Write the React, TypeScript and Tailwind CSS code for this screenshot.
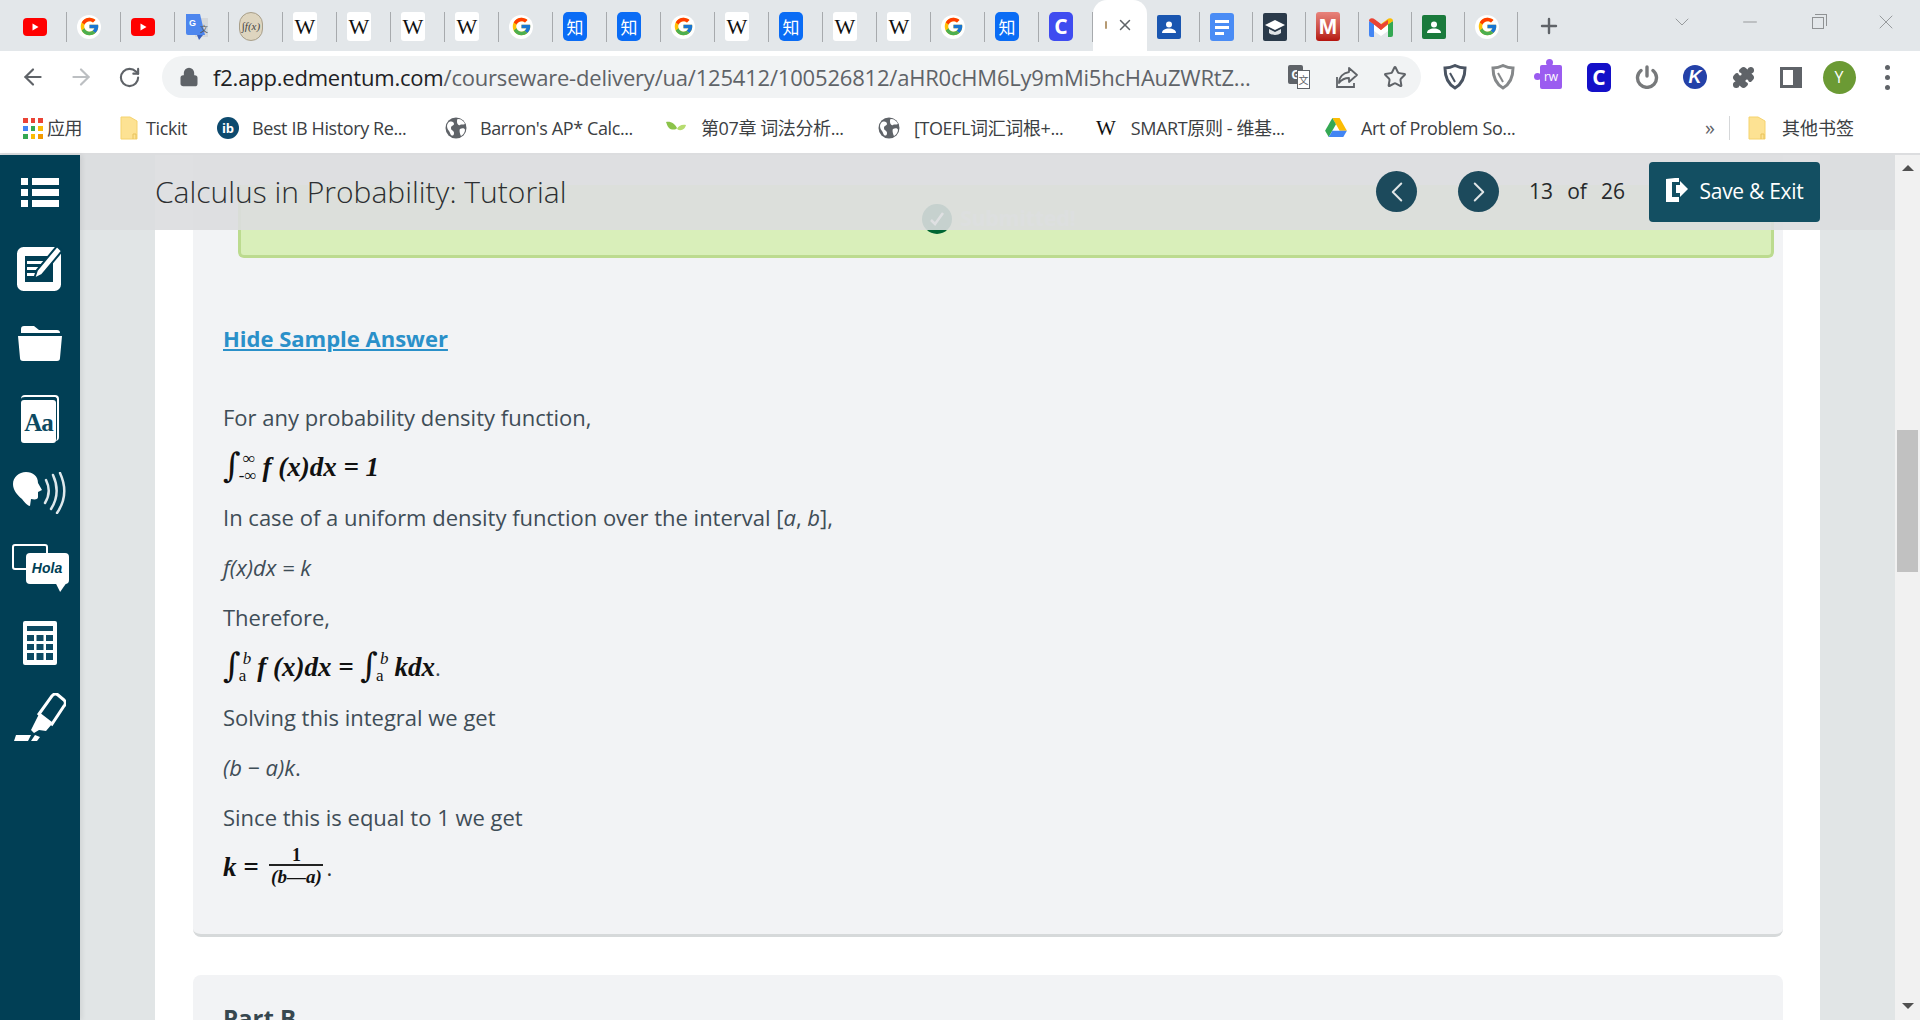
import { ReactNode } from "react";
import { ArrowLeft, ArrowRight, RotateCw, Lock, Star, X, Plus, Minus, ChevronDown, ChevronLeft, ChevronRight, Puzzle } from "lucide-react";
import { FcGoogle } from "react-icons/fc";

function YouTube() {
  return (
    <svg viewBox="0 0 24 24" className="w-6 h-6">
      <rect x="0" y="3" width="24" height="18" rx="4" fill="#f00" />
      <path d="M9.5 8.5v7l6-3.5z" fill="#fff" />
    </svg>
  );
}

function GoogleIcon() {
  return (
    <div className="w-6 h-6 rounded-full bg-white flex items-center justify-center">
      <FcGoogle size={21} />
    </div>
  );
}

function Wiki() {
  return (
    <div className="w-6 h-[29px] -my-[2px] rounded-[3px] bg-white flex items-center justify-center text-[22px] leading-none text-[#111] [font-family:'Liberation_Serif',serif]">
      W
    </div>
  );
}

function Zhihu() {
  return (
    <div className="w-6 h-[29px] -my-[2px] rounded-[5px] bg-[#0a6cf5] flex items-center justify-center text-[17px] leading-none text-white [font-family:'Noto_Sans_CJK_SC',sans-serif]">
      知
    </div>
  );
}

function Translate() {
  return (
    <svg viewBox="0 0 24 28" className="w-6 h-[28px] -my-[2px]">
      <path d="M10 5h13v19H10z" fill="#d5d8db" />
      <path d="M1 1h14l5 21H3a2 2 0 0 1-2-2z" fill="#4d86ee" />
      <path d="M12 22l2 5 4-5z" fill="#3a63c0" />
      <text x="4" y="13" fontSize="9" fontWeight="700" fill="#fff" fontFamily="Liberation Sans">G</text>
      <text x="15" y="19" fontSize="8" fill="#555" fontFamily="Noto Sans CJK SC">文</text>
    </svg>
  );
}

function Fx() {
  return (
    <div className="w-6 h-[29px] -my-[2px] rounded-full bg-[#ded5bf] border border-[#a89f8a] flex items-center justify-center text-[11px] leading-none italic text-[#444] [font-family:'Liberation_Serif',serif]">
      ∫f(x)
    </div>
  );
}

function CBadge({ bg = "#3f4cf0" }: { bg?: string }) {
  return (
    <div className={`w-6 h-[29px] -my-[2px] rounded-[5px] flex items-center justify-center text-[21px] font-bold leading-none text-white ${bg === "#3f4cf0" ? "bg-[#3f4cf0]" : "bg-[#1410c8]"}`}>
      C
    </div>
  );
}

function Contact({ bg }: { bg: string }) {
  return (
    <svg viewBox="0 0 24 24" className="w-6 h-6">
      <rect width="24" height="24" rx="2" fill={bg} />
      <circle cx="12" cy="9.5" r="3" fill="#fff" />
      <path d="M5 18c0-3 3-4.5 7-4.5s7 1.500 7 4.500z" fill="#fff" />
    </svg>
  );
}

function Docs() {
  return (
    <svg viewBox="0 0 24 28" className="w-6 h-[28px] -my-[2px]">
      <rect width="24" height="28" rx="3" fill="#4a8cf5" />
      <path d="M5 7h14v3H5zM5 13h14v3H5zM5 19h9v3H5z" fill="#fff" />
    </svg>
  );
}

function Cap() {
  return (
    <svg viewBox="0 0 24 28" className="w-6 h-[28px] -my-[2px]">
      <rect width="24" height="28" rx="2" fill="#2a3a4a" />
      <path d="M2 12l10-5 10 5-10 5z" fill="#fff" />
      <path d="M6 16v4c3 2.500 9 2.500 12 0v-4l-6 3z" fill="#dfe3e6" />
    </svg>
  );
}

function Mathway() {
  return (
    <div className="w-6 h-[29px] -my-[2px] rounded-[3px] bg-gradient-to-b from-[#e8837c] to-[#b5120d] flex items-center justify-center text-[22px] font-bold leading-none text-white [font-family:'Liberation_Sans',sans-serif]">
      M
    </div>
  );
}

function Gmail() {
  return (
    <svg viewBox="0 0 24 20" className="w-6 h-5">
      <path d="M0 4v14a2 2 0 0 0 2 2h3V7z" fill="#4285f4" />
      <path d="M24 4v14a2 2 0 0 1-2 2h-3V7z" fill="#34a853" />
      <path d="M5 7v7l7 5 7-5V7l-7 5z" fill="#fff" />
      <path d="M0 4l5 3.500 7 5.500V7L6 2.500C3.500.5 0 1 0 4z" fill="#ea4335" />
      <path d="M12 7v6l7-5.500L24 4c0-3-3.500-3.500-6-1.500z" fill="#fbbc04" />
      <path d="M5 7l7 6 7-6v-4l-7 4.500L5 3z" fill="#ea4335" />
    </svg>
  );
}

const tabsBefore: ReactNode[] = [
  <YouTube />, <GoogleIcon />, <YouTube />, <Translate />, <Fx />, <Wiki />, <Wiki />, <Wiki />, <Wiki />, <GoogleIcon />,
  <Zhihu />, <Zhihu />, <GoogleIcon />, <Wiki />, <Zhihu />, <Wiki />, <Wiki />, <GoogleIcon />, <Zhihu />, <CBadge />,
];

const tabsAfter: ReactNode[] = [
  <Contact bg="#1a56b0" />, <Docs />, <Cap />, <Mathway />, <Gmail />, <Contact bg="#1a7a3c" />, <GoogleIcon />,
];

function Tab({ icon, width }: { icon: ReactNode; width: string }) {
  return (
    <div className={`${width} h-[29px] mt-3 pl-[10px] flex items-center justify-between shrink-0`}>
      {icon}
      <div className="w-[1.5px] h-[30px] bg-[#a7aaad]" />
    </div>
  );
}

function TabStrip() {
  return (
    <div className="h-[51px] shrink-0 bg-[#e3e7ea] flex items-start pl-[13px]">
      {tabsBefore.map((icon, i) => (
        <Tab key={i} icon={icon} width="w-[54px]" />
      ))}
      <div className="w-[54px] h-[51px] bg-white rounded-t-[14px] shrink-0 flex items-center pl-[12px] pb-[1px]">
        <div className="w-[2px] h-2 bg-[#b69a73] rounded-full" />
        <X size={18} strokeWidth={2} className="ml-[9px] text-[#5f6368]" />
      </div>
      {tabsAfter.map((icon, i) => (
        <Tab key={i} icon={icon} width="w-[53px]" />
      ))}
      <Plus size={24} strokeWidth={2.4} className="ml-[19px] mt-[14px] text-[#5f6368] shrink-0" />
      <div className="ml-auto flex text-[#8f9294]">
        <div className="w-[68px] h-[44px] flex items-center justify-center"><ChevronDown size={24} strokeWidth={0.9} /></div>
        <div className="w-[68px] h-[44px] flex items-center justify-center"><Minus size={22} strokeWidth={1} /></div>
        <div className="w-[68px] h-[44px] flex items-center justify-center">
          <div className="w-3 h-3 mt-[2px] border border-[#8f9294] relative">
            <div className="absolute -top-[4px] -right-[4px] w-3 h-3 border-t border-r border-[#8f9294]" />
          </div>
        </div>
        <div className="w-[68px] h-[44px] flex items-center justify-center"><X size={24} strokeWidth={0.9} /></div>
      </div>
    </div>
  );
}

function Shield({ color }: { color: string }) {
  return (
    <svg viewBox="0 0 24 26" className="w-6 h-[26px]" fill="none" stroke={color} strokeWidth="3">
      <path d="M2 4c4 0 7-1 10-2.500C15 3 18 4 22 4c0 9-3 16-10 20C5 20 2 13 2 4z" />
      <path d="M7 9l5 9" strokeWidth="2" />
    </svg>
  );
}

function ExtBox({ children }: { children: ReactNode }) {
  return <div className="w-12 h-[52px] flex items-center justify-center shrink-0">{children}</div>;
}

function Toolbar() {
  return (
    <div className="h-[52px] shrink-0 bg-white flex items-center pl-[9px]">
      <ExtBox><ArrowLeft size={26} strokeWidth={2} className="text-[#5f6368]" /></ExtBox>
      <ExtBox><ArrowRight size={26} strokeWidth={2} className="text-[#bcbfc2]" /></ExtBox>
      <ExtBox><RotateCw size={23} strokeWidth={2.2} className="text-[#5f6368]" /></ExtBox>
      <div className="ml-[9px] w-[1259px] h-[42px] rounded-full bg-[#f1f3f4] flex items-center pl-[17px] pr-[2px]">
        <Lock size={20} strokeWidth={2.4} className="text-[#5f6368] fill-[#5f6368] shrink-0" />
        <div className="ml-[14px] w-[1041px] whitespace-nowrap overflow-hidden text-[22px] tracking-[-0.2px] text-[#5f6368]">
          <span className="text-[#202124]">f2.app.edmentum.com</span>/courseware-delivery/ua/125412/100526812/aHR0cHM6Ly9mMi5hcHAuZWRtZ...
        </div>
        <div className="ml-auto flex items-center">
          <ExtBox>
            <div className="relative w-[22px] h-[24px] text-[#5f6368]">
              <div className="absolute left-0 top-0 w-[15px] h-[19px] rounded-[2px] bg-[#5f6368] text-white text-[12px] font-bold leading-[19px] text-center">G</div>
              <div className="absolute right-0 bottom-0 w-[13px] h-[19px] border border-[#5f6368] bg-white text-[10px] leading-[17px] text-center [font-family:'Noto_Sans_CJK_SC',sans-serif]">文</div>
            </div>
          </ExtBox>
          <ExtBox>
            <svg viewBox="0 0 24 24" className="w-6 h-6" fill="none" stroke="#5f6368" strokeWidth="1.800">
              <path d="M2 12v10h17v-4" />
              <path d="M14 3l8 7-8 7v-4c-4 0-7 1-10 5 0-6 4-10 10-11z" strokeLinejoin="round" />
            </svg>
          </ExtBox>
          <ExtBox><Star size={24} strokeWidth={2} className="text-[#5f6368]" /></ExtBox>
        </div>
      </div>
      <div className="ml-[10px] flex items-center">
        <ExtBox><Shield color="#4a5462" /></ExtBox>
        <ExtBox><Shield color="#85888a" /></ExtBox>
        <ExtBox>
          <div className="relative w-[22px] h-[24px] bg-[#9b5cf0] rounded-[2px] text-white text-[12px] leading-[24px] text-center">
            <div className="absolute -top-[6px] left-[6px] w-[7px] h-[7px] rounded-full bg-[#9b5cf0]" />
            <div className="absolute top-[8px] -left-[6px] w-[7px] h-[7px] rounded-full bg-[#9b5cf0]" />
            rw
          </div>
        </ExtBox>
        <ExtBox><CBadge bg="#1410c8" /></ExtBox>
        <ExtBox>
          <svg viewBox="0 0 24 24" className="w-6 h-6" fill="none" stroke="#77797b" strokeWidth="3.400" strokeLinecap="round">
            <path d="M12 2v9" />
            <path d="M6 5.500a9.500 9.500 0 1 0 12 0" />
          </svg>
        </ExtBox>
        <ExtBox>
          <div className="w-6 h-6 rounded-full bg-[#2441a8] text-white text-[18px] font-bold italic leading-[24px] text-center [font-family:'Liberation_Sans',sans-serif]">K</div>
        </ExtBox>
        <ExtBox><Puzzle size={23} strokeWidth={2} className="text-[#5f6368] fill-[#5f6368]" /></ExtBox>
        <ExtBox>
          <div className="w-[22px] h-[21px] border-[3.500px] border-r-[9px] border-[#5f6368] bg-white" />
        </ExtBox>
        <ExtBox>
          <div className="w-[33px] h-[33px] rounded-full bg-[#6b9a34] text-white text-[16px] leading-[33px] text-center">Y</div>
        </ExtBox>
        <ExtBox>
          <div className="flex flex-col gap-[5px]">
            <div className="w-[5px] h-[5px] rounded-full bg-[#5f6368]" />
            <div className="w-[5px] h-[5px] rounded-full bg-[#5f6368]" />
            <div className="w-[5px] h-[5px] rounded-full bg-[#5f6368]" />
          </div>
        </ExtBox>
      </div>
    </div>
  );
}

function Apps() {
  const colors = ["bg-[#ea4335]", "bg-[#ea4335]", "bg-[#ea4335]", "bg-[#4285f4]", "bg-[#34a853]", "bg-[#fbbc04]", "bg-[#34a853]", "bg-[#fbbc04]", "bg-[#f29900]"];
  return (
    <div className="grid grid-cols-3 gap-[3px] w-[20px]">
      {colors.map((c, i) => (
        <div key={i} className={`h-[5px] ${c}`} />
      ))}
    </div>
  );
}

function FolderMark() {
  return (
    <svg viewBox="0 0 18 24" className="w-[18px] h-6">
      <path d="M1 1h9l7 4v18H1z" fill="#fde293" stroke="#f5d36f" />
      <path d="M13 23v-5h3v5" fill="none" stroke="#e8c25a" />
    </svg>
  );
}

function Globe() {
  return (
    <svg viewBox="0 0 22 22" className="w-[22px] h-[22px]">
      <circle cx="11" cy="11" r="10.500" fill="#5f6368" />
      <path d="M4 5c3-1 5 0 5 2s-3 1-3 4 3 2 3 5-2 3-3 2-1-3-2-4-2-3-2-5 1-3 2-4zM13 2c3 0 6 2 7 5-2 1-4 0-5 1s-3-1-3-3 0-3 1-3zM15 12c2-1 5-1 5 1s-2 5-4 6c-1-2-2-6-1-7z" fill="#fff" />
    </svg>
  );
}

function Leaf() {
  return (
    <svg viewBox="0 0 20 14" className="w-5 h-[14px]">
      <path d="M0 1c5-1 9 2 11 6-1 2-6 2-8 0S1 3 0 1z" fill="#8bc34a" />
      <path d="M11 8c1-3 5-5 9-4-1 4-5 7-9 4z" fill="#b6dc6f" />
    </svg>
  );
}

function DriveIcon() {
  return (
    <svg viewBox="0 0 24 22" className="w-[22px] h-5">
      <path d="M8 0h8l8 14h-8z" fill="#fbbc04" />
      <path d="M8 0l-8 14 4 7 8-14z" fill="#34a853" />
      <path d="M4 21l4-7h16l-4 7z" fill="#4285f4" />
    </svg>
  );
}

const bookmarks = [
  { icon: <Apps />, label: "应用", width: "w-[97px]", gap: "ml-[4px]" },
  { icon: <FolderMark />, label: "Tickit", width: "w-[97px]", gap: "ml-[8px]" },
  {
    icon: (
      <div className="w-[22px] h-[22px] rounded-full bg-[#0d4a6e] text-white text-[13px] font-bold leading-[22px] text-center">ib</div>
    ),
    label: "Best IB History Re...",
    width: "w-[228px]",
    gap: "ml-[13px]",
  },
  { icon: <Globe />, label: "Barron's AP* Calc...", width: "w-[221px]", gap: "ml-[13px]" },
  { icon: <Leaf />, label: "第07章 词法分析...", width: "w-[212px]", gap: "ml-[15px]" },
  { icon: <Globe />, label: "[TOEFL词汇词根+...", width: "w-[218px]", gap: "ml-[14px]" },
  {
    icon: <span className="text-[21px] leading-none text-[#111] [font-family:'Liberation_Serif',serif]">W</span>,
    label: "SMART原则 - 维基...",
    width: "w-[229px]",
    gap: "ml-[15px]",
  },
  { icon: <DriveIcon />, label: "Art of Problem So...", width: "w-[200px]", gap: "ml-[14px]" },
];

function BookmarkBar() {
  return (
    <div className="h-[50px] shrink-0 bg-white flex items-center pl-[23px] text-[18px] text-[#3c4043] [font-family:'Open_Sans','Noto_Sans_CJK_SC',sans-serif]">
      {bookmarks.map((b) => (
        <div key={b.label} className={`${b.width} shrink-0 flex items-center whitespace-nowrap`}>
          {b.icon}
          <span className={`${b.gap} tracking-[-0.4px]`}>{b.label}</span>
        </div>
      ))}
      <span className="ml-[180px] text-[20px] text-[#5f6368]">»</span>
      <div className="ml-[14px] w-px h-6 bg-[#d5d7d9]" />
      <div className="ml-[18px]"><FolderMark /></div>
      <span className="ml-[16px] whitespace-nowrap">其他书签</span>
    </div>
  );
}

function SideButton({ children }: { children: ReactNode }) {
  return <div className="h-[75px] flex items-center justify-center">{children}</div>;
}

function Sidebar() {
  return (
    <div className="w-20 shrink-0 bg-[#013f55] flex flex-col shadow-[2px_0_5px_rgba(0,0,0,0.08)] z-20">
      <SideButton>
        <svg viewBox="0 0 38 29" className="w-[38px] h-[29px]" fill="#fff">
          <path d="M0 0h7v7H0zM11 0h27v7H11zM0 11h7v7H0zM11 11h27v7H11zM0 22h7v7H0zM11 22h27v7H11z" />
        </svg>
      </SideButton>
      <SideButton>
        <svg viewBox="0 0 46 46" className="w-[46px] h-[46px]">
          <rect x="2.500" y="4.500" width="39" height="39" rx="4" fill="none" stroke="#fff" strokeWidth="5" />
          <rect x="5" y="7" width="34" height="34" fill="#fff" />
          <rect x="8" y="11" width="28" height="26" fill="#013f55" />
          <path d="M10 16h20v3H10zM10 22h16v3H10zM10 28h9v3H10z" fill="#fff" />
          <path d="M40 1l5 5-20 24-8 4 3-9z" fill="#fff" stroke="#013f55" strokeWidth="2" />
        </svg>
      </SideButton>
      <SideButton>
        <svg viewBox="0 0 44 36" className="w-11 h-9" fill="#fff">
          <path d="M3 4c0-2 1-3 3-3h10l5 4h18c2 0 3 1 3 3H3z" />
          <path d="M0 11h44l-2 22c0 2-1 3-3 3H5c-2 0-3-1-3-3z" />
        </svg>
      </SideButton>
      <SideButton>
        <div className="relative w-[38px] h-[46px] rounded-[4px] border-t-2 border-r-2 border-white">
          <div className="absolute left-0 top-[3px] w-[35px] h-[43px] rounded-[3px] bg-white text-[#0d4a62] text-[25px] font-bold leading-[46px] text-center tracking-[-1px] [font-family:'Liberation_Serif',serif]">
            Aa
          </div>
        </div>
      </SideButton>
      <SideButton>
        <svg viewBox="0 0 54 42" className="w-[54px] h-[42px]">
          <path d="M13 0c7 0 12 4 12 11l4 7-4 2v5c0 2-2 3-7 2l-1 7c-2 0-5-3-8-7C4 23 0 18 0 12 0 5 6 0 13 0z" fill="#fff" />
          <path d="M33 8c4 8 4 15-1 23M40 3c5 11 5 23-2 34M47 1c6 13 6 27-3 40" fill="none" stroke="#dfe8ec" strokeWidth="2.500" strokeLinecap="round" />
        </svg>
      </SideButton>
      <SideButton>
        <div className="relative w-[57px] h-[48px]">
          <div className="absolute left-0 top-0 w-[36px] h-[26px] rounded-[3px] border-[2.500px] border-white" />
          <div className="absolute left-[14px] top-[9px] w-[43px] h-[31px] rounded-[4px] bg-white text-[#013f55] text-[14px] font-bold italic leading-[31px] text-center [font-family:'Liberation_Sans',sans-serif]">
            Hola
          </div>
          <svg viewBox="0 0 12 10" className="absolute left-[43px] top-[39px] w-3 h-[9px]" fill="#fff"><path d="M0 0h12l-7 10z" /></svg>
        </div>
      </SideButton>
      <SideButton>
        <svg viewBox="0 0 34 44" className="w-[34px] h-11">
          <rect width="34" height="44" rx="2" fill="#fff" />
          <path d="M4 5h26v5H4zM4 14h7v6H4zM13.500 14h7v6h-7zM23 14h7v6h-7zM4 23h7v6H4zM13.500 23h7v6h-7zM23 23h7v6h-7zM4 32h7v7H4zM13.500 32h7v7h-7zM23 32h7v7h-7z" fill="#0d4a62" />
        </svg>
      </SideButton>
      <SideButton>
        <svg viewBox="0 0 52 49" className="w-[52px] h-[49px]">
          <path d="M38 3a4 4 0 0 1 6-1l6 5a4 4 0 0 1 0 6L38 31l-13-10z" fill="none" stroke="#fff" strokeWidth="3" />
          <path d="M25 21l13 10-6 7-7-1-5 3-3-3 3-6z" fill="#fff" />
          <path d="M0 48l2-6h15l-3 6zM17 48l4-6 5 2-3 4z" fill="#fff" />
        </svg>
      </SideButton>
    </div>
  );
}

function MathText({ children }: { children: ReactNode }) {
  return <span className="font-bold italic text-[#111] [font-family:'Liberation_Serif',serif]">{children}</span>;
}

function Integral({ upper, lower }: { upper: string; lower: string }) {
  return (
    <span className="inline-flex items-center mr-[6px] text-[#111]">
      <span className="text-[34px] leading-none -mt-[4px] [font-family:'DejaVu_Serif',serif]">∫</span>
      <span className="flex flex-col text-[17px] leading-[17px] italic [font-family:'Liberation_Serif',serif]">
        <span className="ml-[2px]">{upper}</span>
        <span className="-ml-[2px] not-italic">{lower}</span>
      </span>
    </span>
  );
}

function Row({ children }: { children: ReactNode }) {
  return <div className="h-[50px] flex items-center whitespace-pre">{children}</div>;
}

function Answer() {
  return (
    <div className="pl-[30px] mt-[65px]">
      <div className="h-[30px] leading-[30px] text-[22px] font-bold text-[#2a90c9] underline">Hide Sample Answer</div>
      <div className="mt-[39px] text-[22px] text-[#3f4d57]">
        <Row>For any probability density function,</Row>
        <Row>
          <Integral upper="∞" lower="-∞" />
          <span className="text-[27px]"><MathText>f (x)dx = 1</MathText></span>
        </Row>
        <Row>In case of a uniform density function over the interval [<i>a</i>, <i>b</i>],</Row>
        <Row><i>f(x)dx = k</i></Row>
        <Row>Therefore,</Row>
        <Row>
          <Integral upper="b" lower="a" />
          <span className="text-[27px]"><MathText>f (x)dx = </MathText></span>
          <Integral upper="b" lower="a" />
          <span className="text-[27px]"><MathText>kdx</MathText></span>
          <span className="text-[22px]">.</span>
        </Row>
        <Row>Solving this integral we get</Row>
        <Row><i>(b − a)k</i>.</Row>
        <Row>Since this is equal to 1 we get</Row>
        <Row>
          <span className="text-[27px]"><MathText>k = </MathText></span>
          <span className="inline-flex flex-col items-center text-[#111] ml-[4px] [font-family:'Liberation_Serif',serif]">
            <span className="text-[18px] leading-[17px] font-bold">1</span>
            <span className="w-[54px] h-[2px] bg-[#222]" />
            <span className="text-[19px] leading-[21px] font-bold italic">(b—a)</span>
          </span>
          <span className="ml-[3px] text-[#333]">.</span>
        </Row>
      </div>
    </div>
  );
}

function Header() {
  return (
    <div className="absolute left-20 right-[25px] -top-[2px] h-[77px] bg-[#dbdddf]/90 z-10 flex items-center pl-[75px] pr-[75px]">
      <div className="text-[30px] font-light text-[#2c2f31] whitespace-nowrap">Calculus in Probability: Tutorial</div>
      <div className="ml-auto w-[41px] h-[41px] rounded-full bg-[#1c4a5c] flex items-center justify-center">
        <ChevronLeft size={34} strokeWidth={1.4} className="text-[#dfe5e6]" />
      </div>
      <div className="ml-[41px] w-[41px] h-[41px] rounded-full bg-[#1c4a5c] flex items-center justify-center">
        <ChevronRight size={34} strokeWidth={1.4} className="text-[#dfe5e6]" />
      </div>
      <div className="ml-[30px] w-[96px] flex justify-between text-[21px] text-[#26292b]">
        <span>13</span>
        <span>of</span>
        <span>26</span>
      </div>
      <button className="ml-[24px] w-[171px] h-[60px] rounded-[4px] bg-[#134f62] flex items-center justify-center gap-[12px] text-white text-[21px] tracking-[-0.3px]">
        <svg viewBox="0 0 22 24" className="w-[22px] h-6 -mt-[3px]" fill="#fff">
          <path d="M0 1l9-1h4v4h-7v15h7v5H0z" />
          <path d="M10 7h4V3l8 8-8 8v-4h-4z" />
        </svg>
        Save &amp; Exit
      </button>
    </div>
  );
}

function Scrollbar() {
  return (
    <div className="w-[25px] shrink-0 bg-[#f1f1f1] flex flex-col items-center relative">
      <div className="mt-[10px] w-0 h-0 border-x-[6px] border-x-transparent border-b-[6px] border-b-[#505050]" />
      <div className="absolute top-[275px] left-[2px] w-[21px] h-[142px] bg-[#c1c1c1]" />
      <div className="mt-auto mb-[11px] w-0 h-0 border-x-[6px] border-x-transparent border-t-[6px] border-t-[#505050]" />
    </div>
  );
}

export default function App() {
  return (
    <div className="w-[1920px] h-[1020px] overflow-hidden flex flex-col bg-white [font-family:'Open_Sans',sans-serif]">
      <TabStrip />
      <Toolbar />
      <BookmarkBar />
      <div className="flex-1 min-h-0 flex relative border-t-2 border-[#dcdddf]">
        <Sidebar />
        <Header />
        <div className="flex-1 min-w-0 bg-[#e1e5e6] px-[75px] overflow-hidden">
          <div className="bg-white h-full pl-[38px] pr-[37px]">
            <div className="bg-[#f2f3f5] rounded-b-[8px] border-b-[3px] border-[#d6d9da] pb-[42px]">
              <div className="pt-[30px] px-[45px] pr-[9px]">
                <div className="h-[73px] bg-[#d9efba] border-x-[3px] border-b-[3px] border-[#bcdb8f] rounded-b-[6px] flex items-center justify-center gap-2 pb-[2px] pr-[14px]">
                  <div className="w-[30px] h-[30px] rounded-full bg-[#006633] flex items-center justify-center">
                    <svg viewBox="0 0 20 20" className="w-5 h-5" fill="none" stroke="#fff" strokeWidth="2.500"><path d="M4 11l4 4 8-11" /></svg>
                  </div>
                  <span className="text-[21px] font-bold text-[#e4efe0]">Submitted!</span>
                </div>
              </div>
              <Answer />
            </div>
            <div className="mt-[38px] h-[100px] bg-[#f2f3f5] rounded-t-[8px] pl-[30px] pt-[28px] text-[24px] leading-[30px] font-bold text-[#37474f]">
              Part B
            </div>
          </div>
        </div>
        <Scrollbar />
      </div>
    </div>
  );
}
